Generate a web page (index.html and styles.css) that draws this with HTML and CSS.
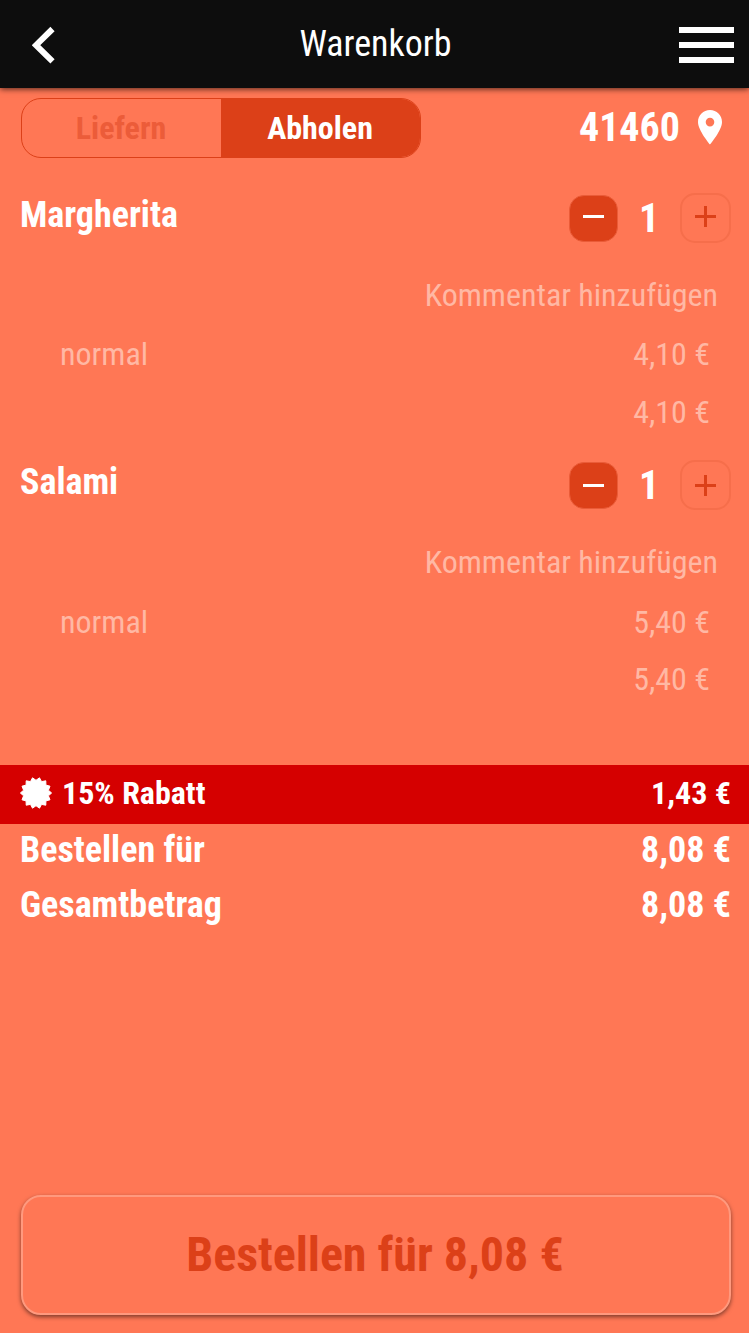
FILE: index.html
```html
<!DOCTYPE html>
<html lang="de">
<head>
    <meta charset="UTF-8">
    <meta name="viewport" content="width=device-width, initial-scale=1.0">
    <title>Warenkorb</title>
    <link rel="stylesheet" href="styles.css">
</head>
<body>
    <header class="header">
        <button class="icon-button" aria-label="Zurück">
            <svg width="24" height="38" viewBox="0 0 24 38"><path d="M20.500 3L4 19.200l16.500 16.200" fill="none" stroke="#fff" stroke-width="6"/></svg>
        </button>
        <h1>Warenkorb</h1>
        <button class="icon-button" aria-label="Menü">
            <svg width="55" height="36" viewBox="0 0 55 36"><path d="M0 0h55v6H0zM0 15h55v6H0zM0 30h55v6H0z" fill="#fff"/></svg>
        </button>
    </header>

    <main class="cart">
        <!-- Delivery or pickup -->
        <div class="order-type">
            <div class="toggle">
                <button class="toggle-option">Liefern</button>
                <button class="toggle-option active">Abholen</button>
            </div>
            <div class="location">
                <span>41460</span>
                <svg width="24" height="35" viewBox="0 0 24 35"><path fill-rule="evenodd" d="M12 0C5.300 0 0 5.300 0 12c0 8.500 12 22.500 12 22.500S24 20.500 24 12C24 5.300 18.700 0 12 0zm0 7.800a4.300 4.300 0 1 1 0 8.600 4.300 4.300 0 0 1 0-8.600z" fill="#fff"/></svg>
            </div>
        </div>

        <!-- Items -->
        <section class="item">
            <div class="item-head">
                <h2>Margherita</h2>
                <div class="quantity raised">
                    <button class="minus" aria-label="Weniger"><svg width="21" height="21" viewBox="0 0 21 21"><path d="M0 10.500h21" stroke="#fff" stroke-width="3"/></svg></button>
                    <span>1</span>
                    <button class="plus" aria-label="Mehr"><svg width="21" height="21" viewBox="0 0 21 21"><path d="M0 10.500h21M10.500 0v21" stroke="#dc4018" stroke-width="3"/></svg></button>
                </div>
            </div>
            <div class="item-row comment">Kommentar hinzufügen</div>
            <div class="item-row"><span>normal</span><span>4,10 €</span></div>
            <div class="item-row sum">4,10 €</div>
        </section>

        <section class="item">
            <div class="item-head">
                <h2>Salami</h2>
                <div class="quantity">
                    <button class="minus" aria-label="Weniger"><svg width="21" height="21" viewBox="0 0 21 21"><path d="M0 10.500h21" stroke="#fff" stroke-width="3"/></svg></button>
                    <span>1</span>
                    <button class="plus" aria-label="Mehr"><svg width="21" height="21" viewBox="0 0 21 21"><path d="M0 10.500h21M10.500 0v21" stroke="#dc4018" stroke-width="3"/></svg></button>
                </div>
            </div>
            <div class="item-row comment">Kommentar hinzufügen</div>
            <div class="item-row option"><span>normal</span><span>5,40 €</span></div>
            <div class="item-row sum">5,40 €</div>
        </section>

        <!-- Totals -->
        <div class="discount">
            <svg width="32" height="34" viewBox="-16 -17 32 34"><path d="M0-12.700L3.500-15.200 5.500-11.400 9.800-12.200 9.900-7.900 14-6.800 12.400-2.800 15.600 0 12.400 2.800 14 6.800 9.900 7.900 9.800 12.200 5.500 11.400 3.500 15.200 0 12.700-3.500 15.200-5.500 11.400-9.800 12.200-9.900 7.900-14 6.800-12.400 2.800-15.600 0-12.400-2.800-14-6.800-9.900-7.900-9.800-12.200-5.500-11.400-3.500-15.200z" fill="#fff" stroke="#fff" stroke-linejoin="round"/></svg>
            <span>15% Rabatt</span>
            <span class="amount">1,43 €</span>
        </div>
        <div class="total"><span>Bestellen für</span><span>8,08 €</span></div>
        <div class="total"><span>Gesamtbetrag</span><span>8,08 €</span></div>
    </main>

    <footer class="footer">
        <button class="order-button">Bestellen für 8,08 €</button>
    </footer>
</body>
</html>
```
FILE: styles.css
```css
* {
    box-sizing: border-box;
}
body {
    margin: 0;
    min-height: 100vh;
    display: flex;
    flex-direction: column;
    background: #ff7755;
    color: white;
    font-family: "Roboto Condensed", Roboto, sans-serif;
    font-stretch: 75%;
    font-size: 32px;
}
button {
    padding: 0;
    border: none;
    background: none;
    color: inherit;
    font: inherit;
    cursor: pointer;
}
svg {
    display: block;
}
h1, h2 {
    margin: 0;
    font-size: 36px;
}
.header {
    height: 88px;
    padding: 1px 15px 0 32px;
    display: grid;
    grid-template-columns: 55px 1fr 55px;
    align-items: center;
    background: #0d0d0d;
    box-shadow: 0 1px 6px rgba(0,0,0,0.7);
}
.header svg {
    margin-top: 1px;
}
.header h1 {
    padding: 0 15px 1px 0;
    font-weight: 400;
    text-align: center;
}
.order-type {
    height: 90px;
    padding: 10px 27px 0 21px;
    display: flex;
    justify-content: space-between;
    align-items: flex-start;
}
.toggle {
    width: 400px;
    height: 60px;
    display: flex;
    border: 1px solid #dc4018;
    border-radius: 20px;
    overflow: hidden;
}
.toggle-option {
    flex: 1;
    padding-right: 1px;
    font-weight: 700;
    color: #ec5c39;
}
.toggle-option.active {
    background: #dc4018;
    color: white;
}
.location {
    height: 58px;
    display: flex;
    align-items: center;
    gap: 18px;
    font-size: 40px;
    font-weight: 700;
}
.item {
    height: 267px;
    padding: 0 18px 0 20px;
}
.item-head {
    height: 80px;
    margin-bottom: 7px;
    display: flex;
    justify-content: space-between;
    align-items: center;
}
.item-head h2 {
    padding-bottom: 6px;
}
.quantity {
    display: flex;
    align-items: center;
    font-size: 40px;
    font-weight: 700;
}
.quantity span {
    width: 62px;
    text-align: center;
}
.minus, .plus {
    display: flex;
    justify-content: center;
    align-items: center;
    border-radius: 15px;
}
.minus {
    width: 49px;
    height: 47px;
    background: #dc4018;
    border: 1px solid #ea5c38;
}
.plus {
    width: 51px;
    height: 50px;
    border: 2px solid #f66e4b;
}
.raised svg {
    margin-bottom: 3px;
}
.item-row {
    height: 59px;
    padding: 0 21px 0 40px;
    display: flex;
    justify-content: space-between;
    align-items: center;
    color: #ffb8a4;
}
.item-row.comment {
    padding-right: 13px;
    justify-content: flex-end;
}
.item-row.option {
    padding-top: 2px;
}
.item-row.sum {
    padding-bottom: 1px;
    justify-content: flex-end;
}
.discount {
    height: 59px;
    margin-top: 53px;
    padding: 0 18px 3px 20px;
    display: flex;
    align-items: center;
    gap: 10px;
    background: #d50000;
    font-weight: 700;
}
.amount {
    margin-left: auto;
}
.total {
    height: 51px;
    margin-bottom: 4px;
    padding: 0 18px 0 20px;
    display: flex;
    justify-content: space-between;
    align-items: center;
    font-size: 36px;
    font-weight: 700;
}
.footer {
    margin-top: auto;
    padding: 0 18px 18px 21px;
}
.order-button {
    width: 100%;
    height: 120px;
    padding: 0 2px 1px 0;
    border: 2px solid #ff997e;
    border-radius: 20px;
    background: #ff7755;
    box-shadow: 0 2px 4px rgba(0,0,0,0.5);
    color: #dc4018;
    font-size: 48px;
    font-weight: 700;
}
```
